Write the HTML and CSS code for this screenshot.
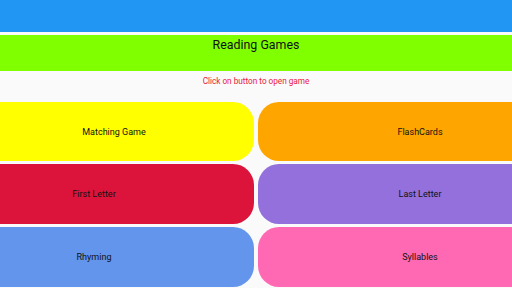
FILE: index.html
```html
<!DOCTYPE html>
<html>
<head>
<meta charset="utf-8">
<link rel="stylesheet" href="styles.css">
</head>
<body>
<div class="appbar"></div>
<div class="title-bar"><h1 class="title">Reading Games</h1></div>
<p class="hint">Click on button to open game</p>
<div class="grid">
  <div class="btn left yellow first">Matching Game</div>
  <div class="btn right orange">FlashCards</div>
  <div class="btn left crimson">First Letter</div>
  <div class="btn right purple">Last Letter</div>
  <div class="btn left blue">Rhyming</div>
  <div class="btn right pink">Syllables</div>
</div>
</body>
</html>
```
FILE: styles.css
```css
html, body {
  margin: 0;
  padding: 0;
  background: #fafafa;
  font-family: Roboto, "Liberation Sans", sans-serif;
  width: 512px;
  height: 288px;
  overflow: hidden;
}
.appbar {
  height: 32px;
  background: #2196f3;
}
.title-bar {
  margin-top: 3px;
  height: 36px;
  background: #7fff00;
  display: flex;
  justify-content: center;
}
.title {
  margin: 2px 0 0;
  font-size: 12.4px;
  font-weight: 400;
  line-height: 16px;
  color: #111;
}
.hint {
  margin: 4px 0 0;
  text-align: center;
  font-size: 8.2px;
  line-height: 12px;
  color: #e8173a;
}
.grid {
  margin-top: 15px;
  display: grid;
  grid-template-columns: 254px 254px;
  grid-template-rows: 59px 60px 60px;
  column-gap: 4px;
  row-gap: 3px;
}
.btn {
  display: flex;
  align-items: center;
  justify-content: center;
  font-size: 9px;
  color: #111;
}
.left {
  border-radius: 0 21px 21px 0;
  padding-right: 66px;
}
.left.first {
  padding-right: 26px;
}
.right {
  border-radius: 21px 0 0 21px;
  padding-left: 70px;
}
.yellow { background: #ffff00; }
.orange { background: #ffa500; }
.crimson { background: #dc143c; }
.purple { background: #9370db; }
.blue { background: #6495ed; }
.pink { background: #ff69b4; }
```
